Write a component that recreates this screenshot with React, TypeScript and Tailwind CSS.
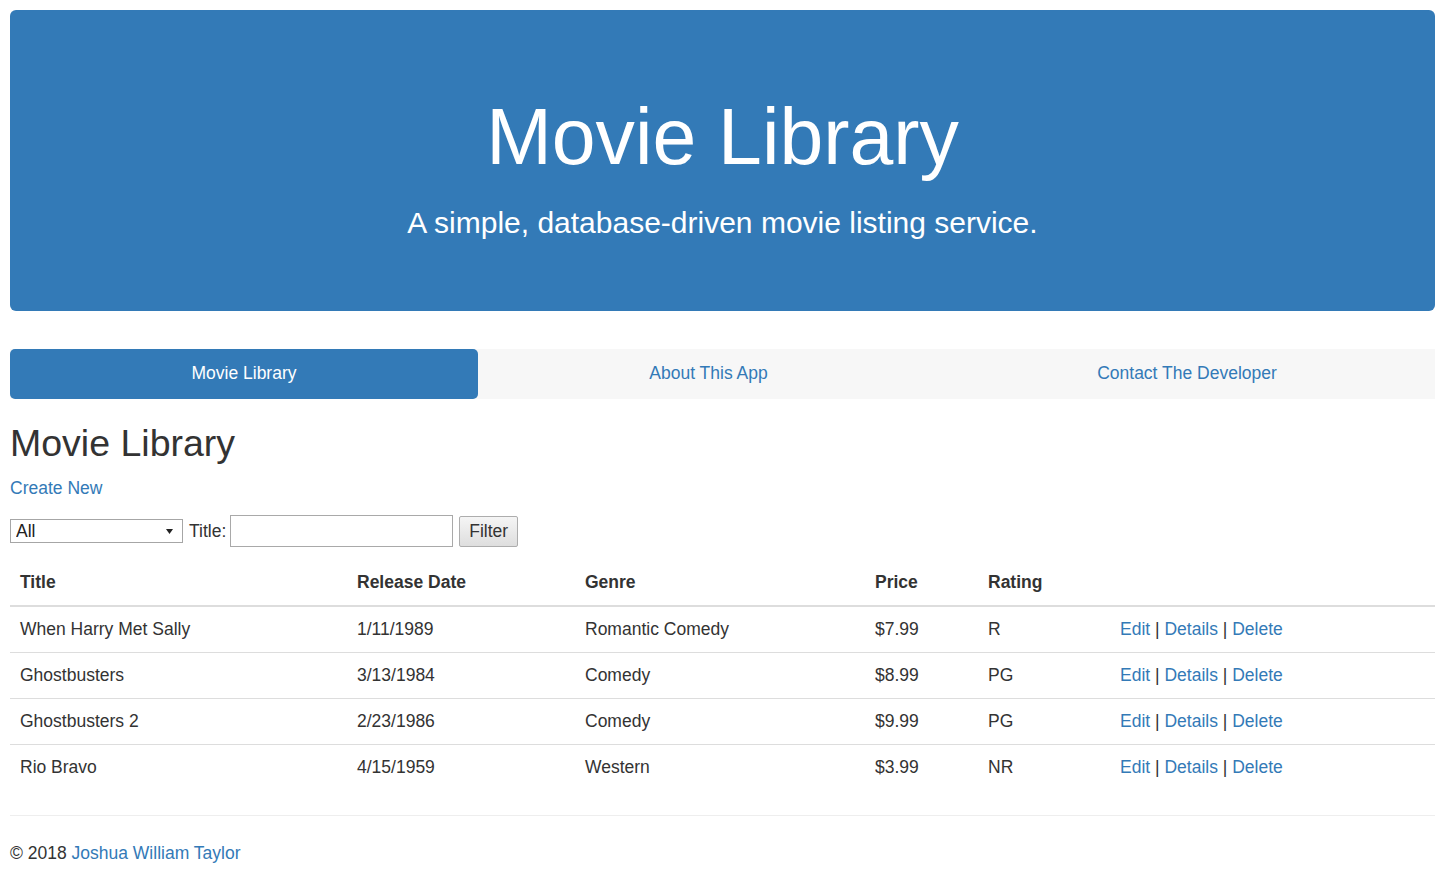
import React from 'react';

interface Movie {
  title: string;
  releaseDate: string;
  genre: string;
  price: string;
  rating: string;
}

const movies: Movie[] = [
  { title: 'When Harry Met Sally', releaseDate: '1/11/1989', genre: 'Romantic Comedy', price: '$7.99', rating: 'R' },
  { title: 'Ghostbusters', releaseDate: '3/13/1984', genre: 'Comedy', price: '$8.99', rating: 'PG' },
  { title: 'Ghostbusters 2', releaseDate: '2/23/1986', genre: 'Comedy', price: '$9.99', rating: 'PG' },
  { title: 'Rio Bravo', releaseDate: '4/15/1959', genre: 'Western', price: '$3.99', rating: 'NR' },
];

const App: React.FC = () => {
  return (
    <div
      className="pl-[10px] pr-[15px] pt-[10px] text-[17.5px] leading-[25px] text-[#333] bg-white"
      style={{ fontFamily: '"Liberation Sans", Arial, sans-serif' }}
    >
      {/* Jumbotron */}
      <div className="h-[301px] rounded-[6px] bg-[#337ab7] text-white flex flex-col items-center pt-[88px]">
        <h1 className="text-[78.75px] leading-[78.75px] font-normal">Movie Library</h1>
        <p className="mt-[31px] text-[30px] leading-[30px]">A simple, database-driven movie listing service.</p>
      </div>

      {/* Nav pills */}
      <nav className="mt-[38px] h-[50px] flex bg-[#f7f7f7]">
        <a className="w-[468px] flex items-center justify-center pb-[1px] rounded-[5px] bg-[#337ab7] text-white">
          Movie Library
        </a>
        <a className="w-[461px] flex items-center justify-center pb-[1px] text-[#337ab7]">About This App</a>
        <a className="flex-1 flex items-center justify-center pb-[1px] text-[#337ab7]">Contact The Developer</a>
      </nav>

      <h2 className="mt-[24px] text-[37.5px] leading-[41.25px] font-normal">Movie Library</h2>
      <p className="mt-[12px]">
        <a className="text-[#337ab7]">Create New</a>
      </p>

      {/* Filter form */}
      <div className="mt-[14px] h-[32px] flex items-center">
        <div className="relative w-[173px] h-[24px]">
          <select className="appearance-none w-full h-full border border-[#a6a6a6] bg-white pl-[5px] text-[17.5px] leading-[22px] text-[#222] outline-none">
            <option>All</option>
          </select>
          <svg className="absolute right-[10px] top-[10px] pointer-events-none" width="7" height="5" viewBox="0 0 7 5">
            <path d="M0 0h7L3.5 5z" fill="#222" />
          </svg>
        </div>
        <label className="ml-[6px] mr-[4px]">Title:</label>
        <input
          type="text"
          className="w-[223px] h-[32px] border border-[#a9a9a9] bg-white outline-none px-[4px]"
        />
        <button className="ml-[6px] h-[31px] px-[9px] border border-[#adadad] rounded-[2px] bg-linear-to-b from-[#f5f5f5] to-[#dedede] text-[#333]">
          Filter
        </button>
      </div>

      {/* Movie table */}
      <table className="mt-[13px] w-full table-fixed border-collapse">
        <colgroup>
          <col className="w-[337px]" />
          <col className="w-[228px]" />
          <col className="w-[290px]" />
          <col className="w-[113px]" />
          <col className="w-[132px]" />
          <col />
        </colgroup>
        <thead>
          <tr>
            <th className="p-[10px] text-left font-bold border-b-2 border-[#ddd]">Title</th>
            <th className="p-[10px] text-left font-bold border-b-2 border-[#ddd]">Release Date</th>
            <th className="p-[10px] text-left font-bold border-b-2 border-[#ddd]">Genre</th>
            <th className="p-[10px] text-left font-bold border-b-2 border-[#ddd]">Price</th>
            <th className="p-[10px] text-left font-bold border-b-2 border-[#ddd]">Rating</th>
            <th className="p-[10px] border-b-2 border-[#ddd]"></th>
          </tr>
        </thead>
        <tbody>
          {movies.map((m) => (
            <tr key={m.title} className="border-t border-[#ddd]">
              <td className="p-[10px]">{m.title}</td>
              <td className="p-[10px]">{m.releaseDate}</td>
              <td className="p-[10px]">{m.genre}</td>
              <td className="p-[10px]">{m.price}</td>
              <td className="p-[10px]">{m.rating}</td>
              <td className="p-[10px]">
                <a className="text-[#337ab7]">Edit</a> | <a className="text-[#337ab7]">Details</a> |{' '}
                <a className="text-[#337ab7]">Delete</a>
              </td>
            </tr>
          ))}
        </tbody>
      </table>

      <hr className="mt-[25px] border-0 border-t border-[#eee]" />

      {/* Footer */}
      <footer className="mt-[25px]">
        <p>
          © 2018 <a className="text-[#337ab7]">Joshua William Taylor</a>
        </p>
      </footer>
    </div>
  );
};

export default App;
